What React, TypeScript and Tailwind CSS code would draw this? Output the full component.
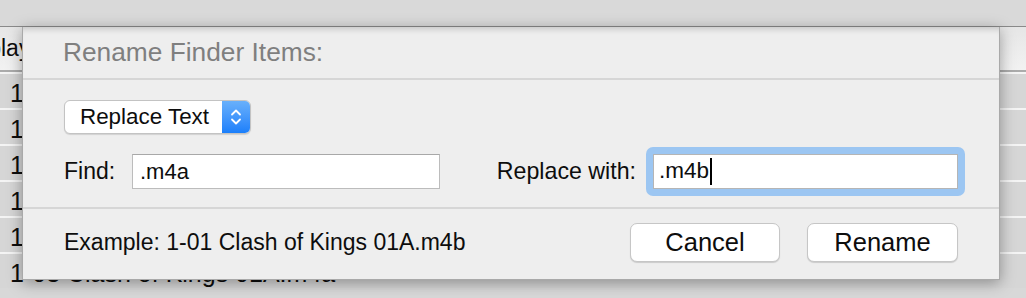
import React from "react";

const rows = [
  "1-01 Clash of Kings 01A.m4a",
  "1-02 Clash of Kings 01B.m4a",
  "1-03 Clash of Kings 02A.m4a",
  "1-04 Clash of Kings 02B.m4a",
  "1-05 Clash of Kings 03A.m4a",
  "1-03 Clash of Kings 01A.m4a",
];

function Chevrons() {
  return (
    <svg width="12" height="20" viewBox="0 0 12 20" fill="none">
      <path d="M2 7.5 L6 3.5 L10 7.5" stroke="white" strokeWidth="1.8" strokeLinecap="round" strokeLinejoin="round" />
      <path d="M2 12.5 L6 16.5 L10 12.5" stroke="white" strokeWidth="1.8" strokeLinecap="round" strokeLinejoin="round" />
    </svg>
  );
}

export default function App() {
  return (
    <div
      className="relative w-[1026px] h-[298px] overflow-hidden bg-[#d8d8d8] text-[#0d0d0d]"
      style={{ fontFamily: '"Liberation Sans", Arial, sans-serif' }}
    >
      {/* toolbar */}
      <div className="h-[27px] bg-[#d9d9d9] border-b border-[#8a8a8a]" />
      {/* table header */}
      <div className="h-[45px] bg-gradient-to-b from-[#e6e6e6] to-[#f2f2f2] border-b-2 border-[#ababab] flex items-center overflow-hidden whitespace-nowrap">
        <span className="shrink-0 ml-[-45px] text-[23px] leading-none">Display Name</span>
      </div>
      {/* rows */}
      <div className="flex flex-col">
        {rows.map((r, i) => (
          <div
            key={i}
            className="h-[36px] border-t-2 border-[#f4f4f4] bg-[#d6d6d6] flex items-center pl-[10px] pt-[5px] text-[25px] leading-none whitespace-nowrap"
          >
            {r}
          </div>
        ))}
      </div>

      {/* sheet dialog */}
      <div className="absolute left-[22px] top-[27px] w-[978px] h-[253px] bg-[#eeeeee] border-l border-r border-b border-[#a9a9a9] shadow-[0_3px_14px_rgba(0,0,0,0.35),inset_0_7px_6px_-5px_rgba(0,0,0,0.18)] flex flex-col">
        <div className="h-[51px] flex items-center pl-[40px] text-[26.3px] leading-none text-[#7f7f7f]">
          Rename Finder Items:
        </div>
        <div className="h-[2px] bg-[#d6d6d6]" />
        <div className="px-[41px] pt-[20px] pb-[18px] flex flex-col">
          {/* popup */}
          <div className="w-[187px] h-[34px] flex rounded-[6px] bg-white border border-[#c3c3c3] shadow-[0_1px_1px_rgba(0,0,0,0.12)] overflow-hidden">
            <div className="flex-1 flex items-center pl-[15px] text-[22.4px] leading-none">
              Replace Text
            </div>
            <div className="w-[28px] flex items-center justify-center bg-gradient-to-b from-[#68b0fb] to-[#1a7ffb]">
              <Chevrons />
            </div>
          </div>
          {/* find row */}
          <div className="mt-[20px] flex items-center justify-between">
            <div className="flex items-center">
              <span className="w-[68px] text-[23px] leading-none">Find:</span>
              <div className="w-[308px] h-[35px] bg-white border border-[#bcbcbc] border-t-[#a8a8a8] flex items-center pl-[7px] text-[22px] leading-none">
                .m4a
              </div>
            </div>
            <div className="flex items-center">
              <span className="text-[23.2px] leading-none mr-[10px]">Replace with:</span>
              <div className="p-[7px] -m-[7px] ml-0 rounded-[7px] bg-[#9cc6f2]">
                <div className="w-[305px] h-[35px] bg-white border border-[#b5b5b5] flex items-center pl-[5px] text-[22.5px] leading-none">
                  .m4b
                  <span className="inline-block w-[2px] h-[27px] bg-black ml-[1px]" />
                </div>
              </div>
            </div>
          </div>
        </div>
        <div className="h-[2px] bg-[#d6d6d6]" />
        <div className="flex-1 px-[41px] flex items-center justify-between pb-[3px]">
          <span className="text-[23px] leading-none">Example: 1-01 Clash of Kings 01A.m4b</span>
          <div className="flex items-center gap-[27px]">
            <button className="w-[150px] h-[39px] rounded-[7px] bg-white border border-[#c6c6c6] shadow-[0_1px_1px_rgba(0,0,0,0.15)] text-[25.5px] leading-none">
              Cancel
            </button>
            <button className="w-[151px] h-[39px] rounded-[7px] bg-white border border-[#c6c6c6] shadow-[0_1px_1px_rgba(0,0,0,0.15)] text-[25.5px] leading-none">
              Rename
            </button>
          </div>
        </div>
      </div>
    </div>
  );
}
